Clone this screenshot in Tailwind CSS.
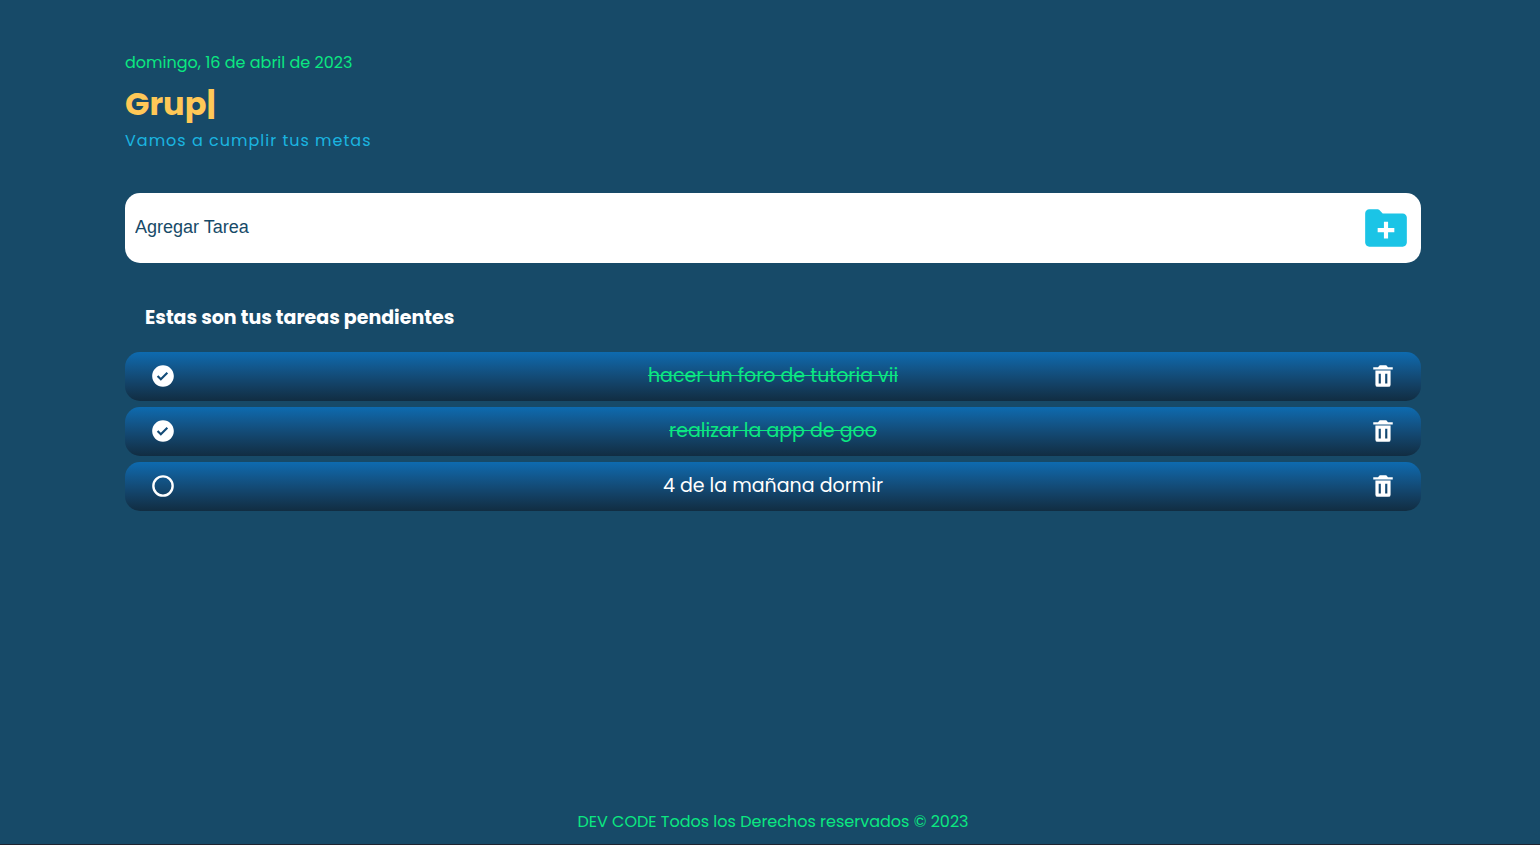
<!DOCTYPE html>
<html lang="es">
<head>
<meta charset="utf-8">
<meta name="viewport" content="width=device-width, initial-scale=1">
<title>Lista de tareas</title>
<script src="https://cdn.jsdelivr.net/npm/@tailwindcss/browser@4"></script>
</head>
<body class="flex min-h-screen flex-col border-b border-[#1f2430] bg-[#174a68] pt-[51px] pr-[119px] pb-[10px] pl-[125px] font-[Poppins,Inter,sans-serif] text-base text-white">
  <svg class="hidden" aria-hidden="true">
    <symbol id="done" viewBox="0 0 24 24"><path d="M12 2C6.486 2 2 6.486 2 12s4.486 10 10 10 10-4.486 10-10S17.514 2 12 2zm-1.999 14.413-3.713-3.705L7.7 11.292l2.299 2.295 5.294-5.294 1.414 1.414-6.706 6.706z"/></symbol>
    <symbol id="open" viewBox="0 0 24 24"><circle cx="12" cy="12" r="8.9" fill="none" stroke="currentColor" stroke-width="2.2"/></symbol>
    <symbol id="trash" viewBox="0 0 24 24"><path d="M6 7H5v13a2 2 0 0 0 2 2h10a2 2 0 0 0 2-2V7H6zm4 12H8v-9h2v9zm6 0h-2v-9h2v9zm.618-15L15 2H9L7.382 4H3v2h18V4z"/></symbol>
  </svg>

  <header>
    <p class="leading-6 text-[#0be881]">domingo, 16 de abril de 2023</p>
    <h1 class="mt-1 text-[32px] leading-[50px] font-bold text-[#ffc857]">Grup|</h1>
    <p class="leading-6 tracking-[1px] text-[#1bb5e0]">Vamos a cumplir tus metas</p>
  </header>

  <main class="flex-1">
    <form class="mt-10 flex h-[70px] items-center rounded-[15px] bg-white pr-[10px] pl-[10px]">
      <input type="text" aria-label="Agregar Tarea" placeholder="Agregar Tarea" class="min-w-0 flex-1 pb-[2px] font-['Liberation_Sans',Arial,sans-serif] text-lg text-[#174a68] outline-none placeholder:text-[#174a68]">
      <button type="button" aria-label="Agregar" class="cursor-pointer text-[#1bc4e6]">
        <svg class="size-[50px]" viewBox="0 0 24 24" fill="currentColor"><path d="M20 5h-9.586L8.707 3.293A.997.997 0 0 0 8 3H4c-1.103 0-2 .897-2 2v14c0 1.103.897 2 2 2h16c1.103 0 2-.897 2-2V7c0-1.103-.897-2-2-2zm-4 9h-3v3h-2v-3H8v-2h3V9h2v3h3v2z"/></svg>
      </button>
    </form>

    <h2 class="mt-[41px] ml-5 text-[19px] leading-7 font-bold">Estas son tus tareas pendientes</h2>

    <ul class="mt-5 flex flex-col gap-[6px] text-[19px]">
      <li class="flex h-[49px] items-center rounded-[15px] bg-linear-to-b from-[#0d6bb0] to-[#112d42] px-[25px] pb-px">
        <input id="t1" type="checkbox" checked class="peer sr-only">
        <label for="t1" aria-label="Completada" class="hidden cursor-pointer peer-checked:block"><svg class="size-[26px]" fill="currentColor"><use href="#done"/></svg></label>
        <label for="t1" class="flex-1 cursor-pointer text-center decoration-1 peer-checked:text-[#0be881] peer-checked:line-through">hacer un foro de tutoria vii</label>
        <button type="button" aria-label="Eliminar" class="cursor-pointer"><svg class="size-[26px]" fill="currentColor"><use href="#trash"/></svg></button>
      </li>
      <li class="flex h-[49px] items-center rounded-[15px] bg-linear-to-b from-[#0d6bb0] to-[#112d42] px-[25px] pb-px">
        <input id="t2" type="checkbox" checked class="peer sr-only">
        <label for="t2" aria-label="Completada" class="hidden cursor-pointer peer-checked:block"><svg class="size-[26px]" fill="currentColor"><use href="#done"/></svg></label>
        <label for="t2" class="flex-1 cursor-pointer text-center decoration-1 peer-checked:text-[#0be881] peer-checked:line-through">realizar la app de goo</label>
        <button type="button" aria-label="Eliminar" class="cursor-pointer"><svg class="size-[26px]" fill="currentColor"><use href="#trash"/></svg></button>
      </li>
      <li class="flex h-[49px] items-center rounded-[15px] bg-linear-to-b from-[#0d6bb0] to-[#112d42] px-[25px] pb-px">
        <input id="t3" type="checkbox" class="peer sr-only">
        <label for="t3" aria-label="Pendiente" class="cursor-pointer peer-checked:hidden"><svg class="size-[26px]" fill="currentColor"><use href="#open"/></svg></label>
        <label for="t3" class="flex-1 cursor-pointer text-center decoration-1 peer-checked:text-[#0be881] peer-checked:line-through">4 de la mañana dormir</label>
        <button type="button" aria-label="Eliminar" class="cursor-pointer"><svg class="size-[26px]" fill="currentColor"><use href="#trash"/></svg></button>
      </li>
    </ul>
  </main>

  <footer class="text-center leading-6 text-[#0be881]">DEV CODE Todos los Derechos reservados © 2023</footer>
</body>
</html>
